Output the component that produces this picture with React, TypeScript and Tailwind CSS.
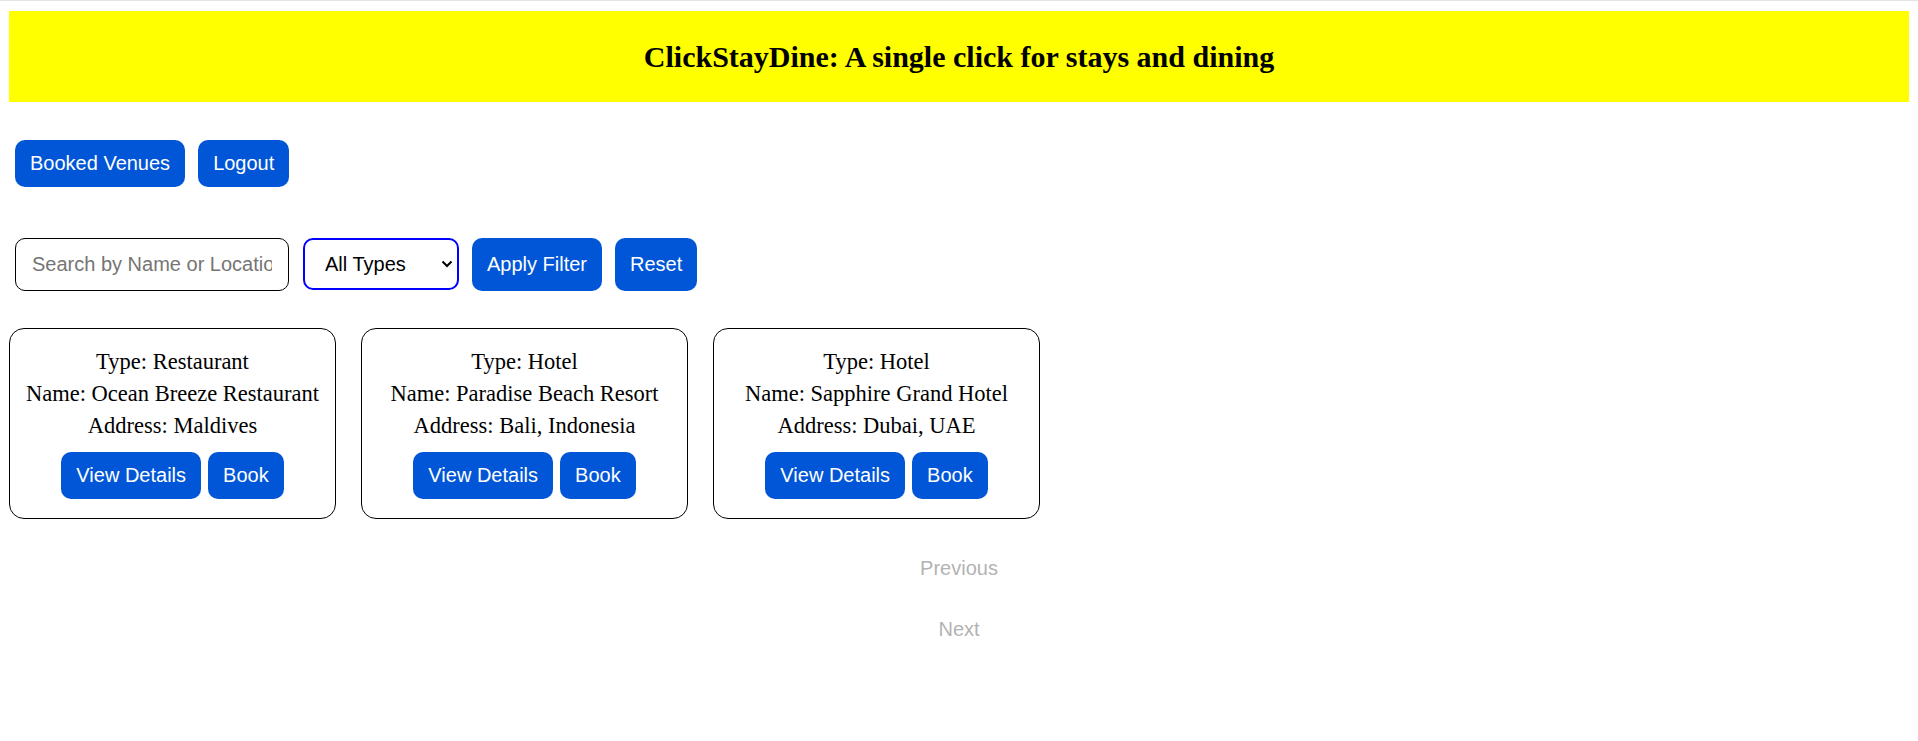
import React from "react";

const venues = [
  { type: "Restaurant", name: "Ocean Breeze Restaurant", address: "Maldives" },
  { type: "Hotel", name: "Paradise Beach Resort", address: "Bali, Indonesia" },
  { type: "Hotel", name: "Sapphire Grand Hotel", address: "Dubai, UAE" },
];

function BlueButton({ children, className = "" }: { children: React.ReactNode; className?: string }) {
  return (
    <button
      className={
        "bg-[#0056d6] text-white rounded-[10px] px-[15px] text-[20px] leading-[23px] font-['Liberation_Sans',Arial,sans-serif] " +
        className
      }
    >
      {children}
    </button>
  );
}

export default function App() {
  return (
    <div className="min-h-screen bg-white font-['Liberation_Sans',Arial,sans-serif]">
      <div className="h-px bg-[#e3e3e3]" />
      <div className="px-[9px] pt-[10px]">
        <header className="h-[91px] bg-[#ffff00] flex items-center justify-center">
          <h1 className="font-['Liberation_Serif','Times_New_Roman',serif] font-bold text-[30px] text-black">
            ClickStayDine: A single click for stays and dining
          </h1>
        </header>

        <div className="mt-[38px] flex gap-[13px] pl-[6px]">
          <BlueButton className="h-[47px]">Booked Venues</BlueButton>
          <BlueButton className="h-[47px]">Logout</BlueButton>
        </div>

        <div className="mt-[51px] flex items-start pl-[6px]">
          <input
            type="text"
            placeholder="Search by Name or Location"
            className="w-[274px] h-[53px] border border-black rounded-[10px] pl-[16px] pr-[16px] text-[20px] placeholder:text-[#757575] outline-none font-['Liberation_Sans',Arial,sans-serif]"
          />
          <div className="relative ml-[14px]">
            <select className="appearance-none w-[156px] h-[52px] border-2 border-[#0000ff] rounded-[10px] pl-[20px] text-[20px] text-black bg-white outline-none font-['Liberation_Sans',Arial,sans-serif]">
              <option>All Types</option>
              <option>Hotel</option>
              <option>Restaurant</option>
            </select>
            <svg
              className="absolute right-[6px] top-[22px] pointer-events-none"
              width="12"
              height="8"
              viewBox="0 0 12 8"
            >
              <path d="M1.5 1.5 L6 6 L10.5 1.5" fill="none" stroke="#000" strokeWidth="2" />
            </svg>
          </div>
          <BlueButton className="h-[53px] ml-[13px]">Apply Filter</BlueButton>
          <BlueButton className="h-[53px] ml-[13px]">Reset</BlueButton>
        </div>

        <div className="mt-[37px] flex gap-[25px]">
          {venues.map((v) => (
            <div
              key={v.name}
              className="w-[327px] border border-black rounded-[15px] pt-[17px] pb-[19px] flex flex-col items-center text-center"
            >
              <div className="font-['Liberation_Serif','Times_New_Roman',serif] text-[22.5px] leading-[32px] text-black">
                <div>Type: {v.type}</div>
                <div>Name: {v.name}</div>
                <div>Address: {v.address}</div>
              </div>
              <div className="mt-[10px] flex gap-[7px]">
                <BlueButton className="h-[47px] px-[14px]">View Details</BlueButton>
                <BlueButton className="h-[47px] px-[14px]">Book</BlueButton>
              </div>
            </div>
          ))}
        </div>

        <div className="mt-[25px] flex flex-col items-center gap-[14px]">
          <button disabled className="h-[47px] px-[15px] text-[20px] text-[#b3b3b3] bg-transparent">
            Previous
          </button>
          <button disabled className="h-[47px] px-[15px] text-[20px] text-[#b3b3b3] bg-transparent">
            Next
          </button>
        </div>
      </div>
    </div>
  );
}
